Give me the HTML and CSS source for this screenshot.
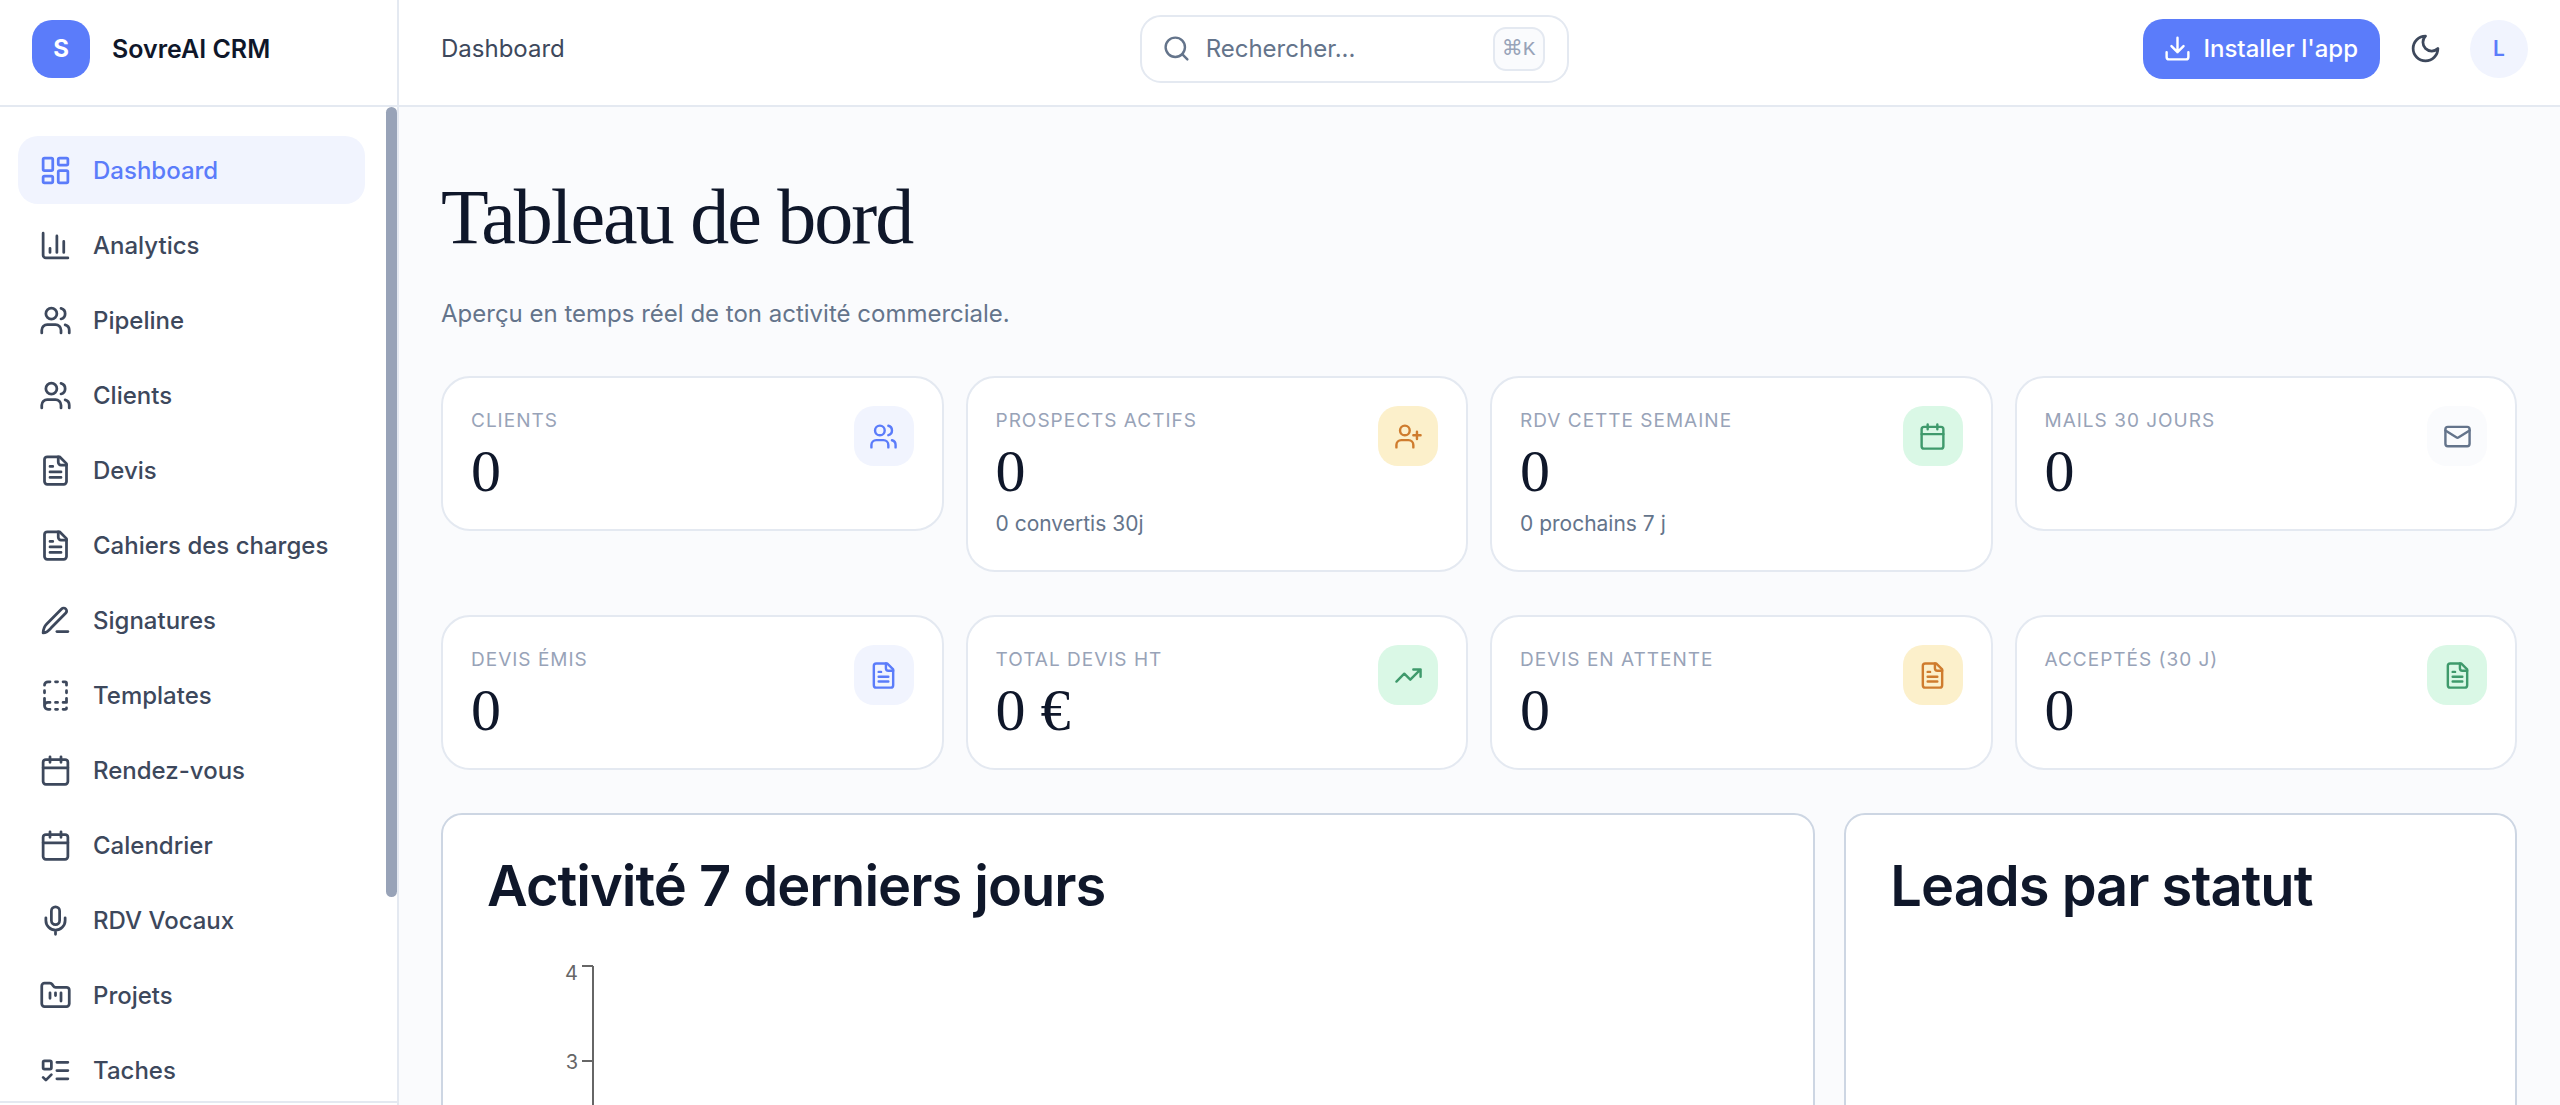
FILE: index.html
```
<!DOCTYPE html>
<html lang="fr">
  <head>
    <meta charset="UTF-8" />
    <meta name="viewport" content="width=device-width, initial-scale=1.0" />
    <title>SovreAI CRM</title>
    <link rel="stylesheet" href="styles.css">
  </head>
  <body>
    <!-- icon set -->
    <svg class="sprite" aria-hidden="true">
      <symbol id="i-dashboard" viewBox="0 0 24 24">
        <rect x="3" y="3" width="7" height="9" rx="1" />
        <rect x="14" y="3" width="7" height="5" rx="1" />
        <rect x="14" y="12" width="7" height="9" rx="1" />
        <rect x="3" y="16" width="7" height="5" rx="1" />
      </symbol>
      <symbol id="i-chart" viewBox="0 0 24 24">
        <path d="M3 3v16a2 2 0 0 0 2 2h16M18 17V9M13 17V5M8 17v-3" />
      </symbol>
      <symbol id="i-users" viewBox="0 0 24 24">
        <path d="M16 21v-2a4 4 0 0 0-4-4H6a4 4 0 0 0-4 4v2" />
        <circle cx="9" cy="7" r="4" />
        <path d="M22 21v-2a4 4 0 0 0-3-3.87M16 3.13a4 4 0 0 1 0 7.75" />
      </symbol>
      <symbol id="i-user-plus" viewBox="0 0 24 24">
        <path d="M16 21v-2a4 4 0 0 0-4-4H6a4 4 0 0 0-4 4v2" />
        <circle cx="9" cy="7" r="4" />
        <path d="M19 8v6M22 11h-6" />
      </symbol>
      <symbol id="i-file" viewBox="0 0 24 24">
        <path d="M15 2H6a2 2 0 0 0-2 2v16a2 2 0 0 0 2 2h12a2 2 0 0 0 2-2V7Z" />
        <path d="M14 2v4a2 2 0 0 0 2 2h4M10 9H8M16 13H8M16 17H8" />
      </symbol>
      <symbol id="i-pen" viewBox="0 0 24 24">
        <path d="M13 20h8" />
        <path d="M3 21c.1-2.6.7-4.6 2.6-6.5L16.4 3.6a2.1 2.1 0 0 1 3.1 3L8.7 17.5C7 19.5 5.5 20.9 3 21Z" />
      </symbol>
      <symbol id="i-template" viewBox="0 0 24 24">
        <path d="M12 17h1.5M12 22h1.5M12 2h1.5M17.5 22H19a1 1 0 0 0 1-1M17.5 2H19a1 1 0 0 1 1 1v1.5M20 14v3h-2.5M20 8.5V10M4 10V8.5M4 19.5V14M4 4.5A2.5 2.5 0 0 1 6.5 2H8M8 22H6.5a1 1 0 0 1 0-5H8" />
      </symbol>
      <symbol id="i-calendar" viewBox="0 0 24 24">
        <path d="M8 2v4M16 2v4M3 10h18" />
        <rect x="3" y="4" width="18" height="18" rx="2" />
      </symbol>
      <symbol id="i-mic" viewBox="0 0 24 24">
        <path d="M12 2a3 3 0 0 0-3 3v7a3 3 0 0 0 6 0V5a3 3 0 0 0-3-3Z" />
        <path d="M19 10v2a7 7 0 0 1-14 0v-2M12 19v3" />
      </symbol>
      <symbol id="i-folder" viewBox="0 0 24 24">
        <path d="M4 20h16a2 2 0 0 0 2-2V8a2 2 0 0 0-2-2h-7.93a2 2 0 0 1-1.66-.9l-.82-1.2A2 2 0 0 0 7.93 3H4a2 2 0 0 0-2 2v13c0 1.1.9 2 2 2Z" />
        <path d="M8 10v4M12 10v2M16 10v6" />
      </symbol>
      <symbol id="i-tasks" viewBox="0 0 24 24">
        <rect x="3" y="5" width="6" height="6" rx="1" />
        <path d="m3 17 2 2 4-4M13 6h8M13 12h8M13 18h8" />
      </symbol>
      <symbol id="i-search" viewBox="0 0 24 24">
        <circle cx="11" cy="11" r="8" />
        <path d="m21 21-4.3-4.3" />
      </symbol>
      <symbol id="i-download" viewBox="0 0 24 24">
        <path d="M21 15v4a2 2 0 0 1-2 2H5a2 2 0 0 1-2-2v-4M7 10l5 5 5-5M12 15V3" />
      </symbol>
      <symbol id="i-moon" viewBox="0 0 24 24">
        <path d="M12 3a6 6 0 0 0 9 9 9 9 0 1 1-9-9Z" />
      </symbol>
      <symbol id="i-mail" viewBox="0 0 24 24">
        <rect x="2" y="4" width="20" height="16" rx="2" />
        <path d="m22 7-8.97 5.7a1.94 1.94 0 0 1-2.06 0L2 7" />
      </symbol>
      <symbol id="i-trend" viewBox="0 0 24 24">
        <path d="m22 7-8.5 8.5-5-5L2 17M16 7h6v6" />
      </symbol>
    </svg>

    <div class="app">
      <aside class="sidebar">
        <div class="brand">
          <span class="brand-logo">S</span>
          <span class="brand-name">SovreAI CRM</span>
        </div>
        <nav class="nav">
          <a class="nav-item active" href="#"><svg class="icon"><use href="#i-dashboard" /></svg>Dashboard</a>
          <a class="nav-item" href="#"><svg class="icon"><use href="#i-chart" /></svg>Analytics</a>
          <a class="nav-item" href="#"><svg class="icon"><use href="#i-users" /></svg>Pipeline</a>
          <a class="nav-item" href="#"><svg class="icon"><use href="#i-users" /></svg>Clients</a>
          <a class="nav-item" href="#"><svg class="icon"><use href="#i-file" /></svg>Devis</a>
          <a class="nav-item" href="#"><svg class="icon"><use href="#i-file" /></svg>Cahiers des charges</a>
          <a class="nav-item" href="#"><svg class="icon"><use href="#i-pen" /></svg>Signatures</a>
          <a class="nav-item" href="#"><svg class="icon"><use href="#i-template" /></svg>Templates</a>
          <a class="nav-item" href="#"><svg class="icon"><use href="#i-calendar" /></svg>Rendez-vous</a>
          <a class="nav-item" href="#"><svg class="icon"><use href="#i-calendar" /></svg>Calendrier</a>
          <a class="nav-item" href="#"><svg class="icon"><use href="#i-mic" /></svg>RDV Vocaux</a>
          <a class="nav-item" href="#"><svg class="icon"><use href="#i-folder" /></svg>Projets</a>
          <a class="nav-item" href="#"><svg class="icon"><use href="#i-tasks" /></svg>Taches</a>
          <span class="nav-thumb"></span>
        </nav>
        <div class="sidebar-footer"></div>
      </aside>

      <div class="content">
        <header class="topbar">
          <span class="crumb">Dashboard</span>
          <label class="search">
            <svg class="icon icon-sm"><use href="#i-search" /></svg>
            <input type="text" placeholder="Rechercher..." aria-label="Rechercher" />
            <kbd>⌘K</kbd>
          </label>
          <div class="actions">
            <button class="install"><svg class="icon icon-sm"><use href="#i-download" /></svg>Installer l'app</button>
            <button class="theme" aria-label="Mode sombre"><svg class="icon"><use href="#i-moon" /></svg></button>
            <button class="avatar">L</button>
          </div>
        </header>

        <main class="page">
          <h1>Tableau de bord</h1>
          <p class="lead">Aperçu en temps réel de ton activité commerciale.</p>

          <section class="stats">
            <article class="stat">
              <div>
                <h3>Clients</h3>
                <p class="value">0</p>
              </div>
              <span class="badge blue"><svg class="icon icon-sm"><use href="#i-users" /></svg></span>
            </article>
            <article class="stat">
              <div>
                <h3>Prospects actifs</h3>
                <p class="value">0</p>
                <p class="hint">0 convertis 30j</p>
              </div>
              <span class="badge amber"><svg class="icon icon-sm"><use href="#i-user-plus" /></svg></span>
            </article>
            <article class="stat">
              <div>
                <h3>RDV cette semaine</h3>
                <p class="value">0</p>
                <p class="hint">0 prochains 7 j</p>
              </div>
              <span class="badge green"><svg class="icon icon-sm"><use href="#i-calendar" /></svg></span>
            </article>
            <article class="stat">
              <div>
                <h3>Mails 30 jours</h3>
                <p class="value">0</p>
              </div>
              <span class="badge grey"><svg class="icon icon-sm"><use href="#i-mail" /></svg></span>
            </article>
          </section>

          <section class="stats">
            <article class="stat">
              <div>
                <h3>Devis émis</h3>
                <p class="value">0</p>
              </div>
              <span class="badge blue"><svg class="icon icon-sm"><use href="#i-file" /></svg></span>
            </article>
            <article class="stat">
              <div>
                <h3>Total devis HT</h3>
                <p class="value">0 €</p>
              </div>
              <span class="badge green"><svg class="icon icon-sm"><use href="#i-trend" /></svg></span>
            </article>
            <article class="stat">
              <div>
                <h3>Devis en attente</h3>
                <p class="value">0</p>
              </div>
              <span class="badge amber"><svg class="icon icon-sm"><use href="#i-file" /></svg></span>
            </article>
            <article class="stat">
              <div>
                <h3>Acceptés (30 j)</h3>
                <p class="value">0</p>
              </div>
              <span class="badge green"><svg class="icon icon-sm"><use href="#i-file" /></svg></span>
            </article>
          </section>

          <section class="panels">
            <article class="panel panel-wide">
              <h2>Activité 7 derniers jours</h2>
              <svg class="chart">
                <path d="M95 11h11M95 106h11M95 200h11M95 295h11M95 389h11M106 11v378" />
                <text x="91" y="25">4</text>
                <text x="91" y="114">3</text>
              </svg>
            </article>
            <article class="panel">
              <h2>Leads par statut</h2>
            </article>
          </section>
        </main>
      </div>
    </div>
  </body>
</html>
```
FILE: styles.css
```
* {
  box-sizing: border-box;
}

body {
  margin: 0;
  background: #fafbfd;
  color: #0f172a;
  font-family: Inter, "Liberation Sans", sans-serif;
  font-size: 24px;
}

h1,
h2,
h3,
p {
  margin: 0;
}

button {
  font: inherit;
  border: none;
  padding: 0;
  cursor: pointer;
}

.sprite {
  display: none;
}

.icon {
  width: 33px;
  height: 33px;
  flex: none;
  fill: none;
  stroke: currentColor;
  stroke-width: 2;
  stroke-linecap: round;
  stroke-linejoin: round;
}

.icon-sm {
  width: 29px;
  height: 29px;
}

.app {
  display: flex;
  height: 100vh;
  overflow: hidden;
}

/* sidebar */
.sidebar {
  width: 399px;
  flex: none;
  display: flex;
  flex-direction: column;
  background: #fff;
  border-right: 2px solid #e4e9f1;
}

.brand {
  display: flex;
  align-items: center;
  gap: 22px;
  height: 107px;
  flex: none;
  padding: 0 32px 8px;
  border-bottom: 2px solid #e4e9f1;
}

.brand-logo {
  display: grid;
  place-items: center;
  width: 58px;
  height: 58px;
  border-radius: 20px;
  background: #5b7cfa;
  color: #fff;
  font-weight: 700;
}

.brand-name {
  font-size: 25px;
  font-weight: 600;
}

.nav {
  position: relative;
  flex: 1;
  min-height: 0;
  overflow: hidden;
  display: flex;
  flex-direction: column;
  gap: 7px;
  padding: 29px 32px 0 18px;
}

.nav-item {
  display: flex;
  align-items: center;
  gap: 21px;
  height: 68px;
  flex: none;
  padding: 0 21px;
  border-radius: 20px;
  color: #3d485c;
  font-weight: 500;
  text-decoration: none;
}

.nav-item.active {
  background: #f1f4fe;
  color: #5b7cfa;
}

/* scroll thumb over the right edge of the menu */
.nav-thumb {
  position: absolute;
  top: 0;
  right: 0;
  width: 11px;
  height: 790px;
  border-radius: 6px;
  background: #98a3b8;
}

.sidebar-footer {
  height: 4px;
  flex: none;
  border-top: 2px solid #e4e9f1;
}

/* top bar */
.content {
  flex: 1;
  min-width: 0;
  display: flex;
  flex-direction: column;
}

.topbar {
  display: flex;
  align-items: center;
  justify-content: space-between;
  height: 107px;
  flex: none;
  padding: 0 32px 8px 42px;
  background: #fff;
  border-bottom: 2px solid #e4e9f1;
}

.crumb {
  color: #3d485c;
}

.search {
  display: flex;
  align-items: center;
  gap: 15px;
  width: 429px;
  height: 68px;
  padding: 0 22px 0 20px;
  border: 2px solid #e4e9f1;
  border-radius: 21px;
  color: #64748b;
}

.search input {
  flex: 1;
  min-width: 0;
  padding: 0;
  border: none;
  outline: none;
  background: none;
  color: inherit;
  font: inherit;
}

.search input::placeholder {
  color: #64748b;
  opacity: 1;
}

.search kbd {
  display: grid;
  place-items: center;
  width: 52px;
  height: 44px;
  border: 2px solid #e4e9f1;
  border-radius: 13px;
  background: #fafbfd;
  color: #98a3b8;
  font-family: "Liberation Mono", "DejaVu Sans", monospace;
  font-size: 21px;
}

.actions {
  display: flex;
  align-items: center;
}

.install {
  display: flex;
  align-items: center;
  gap: 11px;
  height: 60px;
  padding: 0 22px 0 20px;
  border-radius: 20px;
  background: #5b7cfa;
  color: #fff;
  font-weight: 500;
}

.theme {
  display: grid;
  place-items: center;
  width: 68px;
  height: 58px;
  margin: 0 11px;
  background: none;
  color: #3d485c;
}

.avatar {
  width: 58px;
  height: 58px;
  border-radius: 50%;
  background: #f1f4fe;
  color: #5b7cfa;
  font-size: 21px;
  font-weight: 600;
}

/* page */
.page {
  flex: 1;
  min-height: 0;
  overflow: hidden;
  padding: 62px 43px 0 42px;
}

h1 {
  font-family: "Liberation Serif", serif;
  font-size: 78px;
  font-weight: 400;
  line-height: 96px;
  letter-spacing: -2px;
}

.lead {
  margin: 29px 0 42px;
  color: #64748b;
  line-height: 40px;
}

.stats {
  display: grid;
  grid-template-columns: repeat(4, 1fr);
  align-items: start;
  gap: 22px;
  margin-bottom: 43px;
}

.stat {
  display: flex;
  justify-content: space-between;
  align-items: flex-start;
  padding: 28px;
  border: 2px solid #e4e9f1;
  border-radius: 29px;
  background: #fff;
}

.stat h3 {
  color: #98a3b8;
  font-size: 19px;
  font-weight: 400;
  line-height: 29px;
  letter-spacing: 1px;
  text-transform: uppercase;
}

.value {
  margin-top: 6px;
  font-family: "Liberation Serif", serif;
  font-size: 60px;
  line-height: 60px;
}

.hint {
  margin-top: 4px;
  color: #64748b;
  font-size: 21px;
  line-height: 37px;
}

.badge {
  display: grid;
  place-items: center;
  width: 60px;
  height: 60px;
  border-radius: 20px;
}

.blue {
  background: #f1f4fe;
  color: #5b7cfa;
}

.amber {
  background: #fcf0cb;
  color: #cf7c2e;
}

.green {
  background: #daf8e6;
  color: #3f9a6c;
}

.grey {
  background: #fafbfd;
  color: #64748b;
}

.panels {
  display: grid;
  grid-template-columns: repeat(3, 1fr);
  gap: 29px;
}

.panel {
  padding: 44px;
  border: 2px solid #cdd6e3;
  border-radius: 21px;
  background: #fff;
}

.panel-wide {
  grid-column: span 2;
}

.panel h2 {
  font-size: 56px;
  font-weight: 600;
  line-height: 54px;
  letter-spacing: -1px;
}

.chart {
  display: block;
  width: 100%;
  height: 460px;
  margin-top: 42px;
  fill: none;
  stroke: #666;
  stroke-width: 2;
}

.chart text {
  fill: #666;
  stroke: none;
  font-size: 20px;
  text-anchor: end;
}
```
